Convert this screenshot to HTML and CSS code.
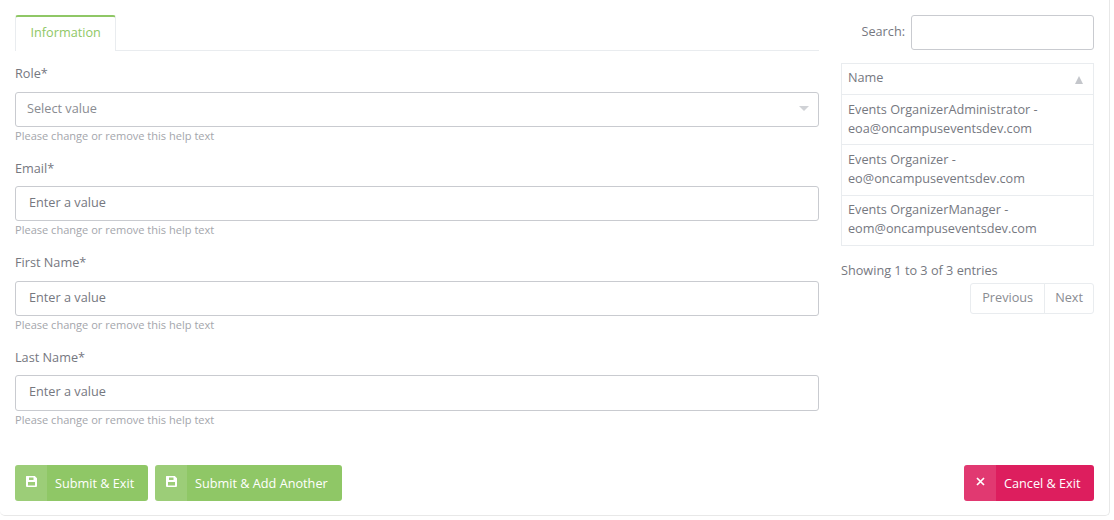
FILE: index.html
```html
<!DOCTYPE html>
<html lang="en">
<head>
    <meta charset="UTF-8">
    <title>Add User</title>
    <link rel="stylesheet" href="styles.css">
</head>
<body>
    <div class="card">
        <div class="card-main">
            <form class="form-col">
                <ul class="tabs">
                    <li class="tab active">Information</li>
                </ul>

                <div class="form-group">
                    <label>Role*</label>
                    <div class="select-box">
                        <span>Select value</span>
                        <i class="caret"></i>
                    </div>
                    <small>Please change or remove this help text</small>
                </div>

                <div class="form-group">
                    <label for="email">Email*</label>
                    <input type="text" id="email" placeholder="Enter a value">
                    <small>Please change or remove this help text</small>
                </div>

                <div class="form-group">
                    <label for="first">First Name*</label>
                    <input type="text" id="first" placeholder="Enter a value">
                    <small>Please change or remove this help text</small>
                </div>

                <div class="form-group">
                    <label for="last">Last Name*</label>
                    <input type="text" id="last" class="input-tall" placeholder="Enter a value">
                    <small>Please change or remove this help text</small>
                </div>
            </form>

            <div class="side-col">
                <div class="search-row">
                    <label for="search">Search:</label>
                    <input type="text" id="search">
                </div>

                <table class="user-table">
                    <thead>
                        <tr>
                            <th>Name<i class="sort-up"></i></th>
                        </tr>
                    </thead>
                    <tbody>
                        <tr><td>Events OrganizerAdministrator - eoa@oncampuseventsdev.com</td></tr>
                        <tr><td>Events Organizer - eo@oncampuseventsdev.com</td></tr>
                        <tr><td>Events OrganizerManager - eom@oncampuseventsdev.com</td></tr>
                    </tbody>
                </table>

                <div class="table-info">Showing 1 to 3 of 3 entries</div>

                <div class="pager">
                    <a class="page-btn">Previous</a>
                    <a class="page-btn">Next</a>
                </div>
            </div>
        </div>

        <div class="actions">
            <button type="button" class="btn btn-green btn-exit">
                <span class="btn-icon">
                    <svg width="13" height="13" viewBox="0 0 13 13"><path fill="currentColor" fill-rule="evenodd" d="M1.500 1h8.300L12 3.200v7.800a1 1 0 0 1-1 1H2a1 1 0 0 1-1-1V1.500a.5.5 0 0 1 .5-.5zM4 2.500v2.500h4.500V2.500zM3 7V10.500h7V7z"/></svg>
                </span>
                <span class="btn-text">Submit &amp; Exit</span>
            </button>
            <button type="button" class="btn btn-green btn-add">
                <span class="btn-icon">
                    <svg width="13" height="13" viewBox="0 0 13 13"><path fill="currentColor" fill-rule="evenodd" d="M1.500 1h8.300L12 3.200v7.800a1 1 0 0 1-1 1H2a1 1 0 0 1-1-1V1.500a.5.5 0 0 1 .5-.5zM4 2.500v2.500h4.500V2.500zM3 7V10.500h7V7z"/></svg>
                </span>
                <span class="btn-text">Submit &amp; Add Another</span>
            </button>
            <button type="button" class="btn btn-red">
                <span class="btn-icon">
                    <svg width="13" height="13" viewBox="0 0 13 13"><path stroke="currentColor" stroke-width="1.700" d="M3 3l7 7M10 3l-7 7"/></svg>
                </span>
                <span class="btn-text">Cancel &amp; Exit</span>
            </button>
        </div>
    </div>
</body>
</html>
```

FILE: styles.css
```css
* {
    box-sizing: border-box;
}

body {
    margin: 0;
    height: 520px;
    overflow: hidden;
    background-color: white;
    font-family: 'Open Sans', sans-serif;
    font-size: 12.7px;
    line-height: 19px;
    color: #76787f;
}

.card {
    width: 1110px;
    height: 516px;
    padding: 15px 15px 14px 15px;
    background: white;
    border-bottom: 1px solid #e8e8e8;
    border-right: 1px solid #e8e8e8;
    border-radius: 0 0 5px 5px;
    display: flex;
    flex-direction: column;
    justify-content: space-between;
}

.card-main {
    display: flex;
    gap: 22px;
}

.form-col {
    width: 804px;
}

.side-col {
    width: 253px;
}

/* tabs */
.tabs {
    list-style: none;
    margin: 0 0 13.4px;
    padding: 0;
    display: flex;
    border-bottom: 1px solid #e9ecef;
    height: 36px;
}

.tab {
    height: 36px;
    padding: 6px 14.5px 0;
    background: white;
    border: 1px solid #e9ecef;
    border-top: 2px solid #8fc766;
    border-bottom: none;
    border-radius: 3px 3px 0 0;
}

.tab.active {
    color: #8fc766;
}

/* form */
.form-group {
    height: 94.4px;
}

.form-group label {
    display: block;
    margin-bottom: 8.6px;
}

.form-group small {
    display: block;
    font-size: 11.05px;
    line-height: 18px;
    color: #a4a6ac;
}

input {
    font-family: inherit;
    font-size: 12.7px;
    color: #76787f;
    outline: none;
}

.form-group input {
    display: block;
    width: 100%;
    height: 35px;
    padding: 0 13px 3px;
    border: 1px solid #c9cbd0;
    border-radius: 3px;
}

.form-group .input-tall {
    height: 36px;
    padding-bottom: 4px;
}

input::placeholder {
    color: #76787f;
    opacity: 1;
}

.select-box {
    height: 35px;
    padding: 0 11px 2px;
    border: 1px solid #c9cbd0;
    border-radius: 3px;
    color: #8a8c92;
    display: flex;
    justify-content: space-between;
    align-items: center;
}

.caret {
    width: 0;
    height: 0;
    margin-right: -2px;
    border-left: 5px solid transparent;
    border-right: 5px solid transparent;
    border-top: 5px solid #d0d2d6;
}

/* search + table */
.search-row {
    display: flex;
    justify-content: flex-end;
    align-items: center;
    gap: 6px;
    margin-bottom: 13px;
}

.search-row label {
    padding-bottom: 2px;
}

.search-row input {
    width: 183px;
    height: 35px;
    padding: 0 10px;
    border: 1px solid #c9cbd0;
    border-radius: 3px;
}

.user-table {
    width: 100%;
    border-collapse: collapse;
    border: 1px solid #e9ecef;
}

.user-table th,
.user-table td {
    padding: 5px 6px 6px;
    text-align: left;
    font-weight: normal;
    border-top: 1px solid #e9ecef;
}

.user-table tr:nth-child(2) td {
    padding-bottom: 7px;
}

.user-table tr:nth-child(3) td {
    padding: 4px 6px 7px;
}

.user-table th {
    position: relative;
    padding: 3px 6px 7px;
    height: 31px;
}

.sort-up {
    position: absolute;
    top: 12px;
    right: 10px;
    width: 0;
    height: 0;
    border-left: 4px solid transparent;
    border-right: 4px solid transparent;
    border-bottom: 8px solid #c4c6cb;
}

.table-info {
    margin-top: 15px;
}

.pager {
    margin-top: 3px;
    display: flex;
    justify-content: flex-end;
}

.page-btn {
    height: 31px;
    padding: 4px 11px;
    border: 1px solid #e9ecef;
    color: #8a8c92;
}

.page-btn:first-child {
    border-radius: 3px 0 0 3px;
}

.page-btn:last-child {
    margin-left: -1px;
    padding: 4px 10px;
    border-radius: 0 3px 3px 0;
}

/* bottom buttons */
.actions {
    display: flex;
    gap: 7px;
}

.btn {
    height: 36px;
    padding: 0;
    border: none;
    border-radius: 3px;
    font-family: inherit;
    font-size: 12.7px;
    color: white;
    display: flex;
    align-items: stretch;
}

.btn-green {
    background-color: #8fc766;
}

.btn-exit {
    width: 133px;
}

.btn-add {
    width: 187px;
}

.btn-red {
    width: 130px;
    margin-left: auto;
    background-color: #dd1e5e;
}

.btn-icon {
    width: 32px;
    background-color: rgba(255,255,255,0.12);
    border-radius: 3px 0 0 3px;
    display: flex;
    justify-content: center;
    align-items: flex-start;
    padding-top: 10px;
}

.btn-text {
    padding: 9px 0 0 8px;
}
```
